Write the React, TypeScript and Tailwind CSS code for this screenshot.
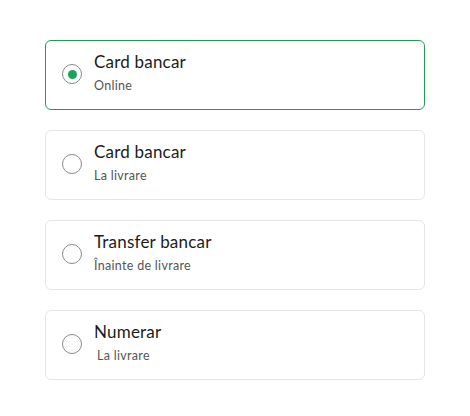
import { useState } from 'react'

const options = [
  { id: 'card-online', title: 'Card bancar', subtitle: 'Online' },
  { id: 'card-delivery', title: 'Card bancar', subtitle: 'La livrare' },
  { id: 'transfer', title: 'Transfer bancar', subtitle: 'Înainte de livrare' },
  { id: 'cash', title: 'Numerar', subtitle: 'La livrare', shift: true },
]

export default function App() {
  const [selected, setSelected] = useState('card-online')

  return (
    <div className="min-h-screen bg-white pt-10 pl-[45px] font-['Lato','Noto_Sans',sans-serif]">
      <div className="flex w-[380px] flex-col gap-5">
        {options.map((opt) => {
          const active = selected === opt.id
          return (
            <button
              key={opt.id}
              onClick={() => setSelected(opt.id)}
              className={`flex h-[70px] items-center rounded-[6px] border bg-white pl-[16px] text-left ${
                active ? 'border-[#1f9d55]' : 'border-[#e6e6e6]'
              }`}
            >
              {/* radio */}
              <span className="-mt-[2px] flex h-[20px] w-[20px] shrink-0 items-center justify-center rounded-full border border-[#8a8a8a]">
                {active && <span className="h-[9px] w-[9px] rounded-full bg-[#1ba35a]" />}
              </span>
              <span className="mb-[4px] ml-3 flex flex-col">
                <span className="text-[17px] leading-5 tracking-[0.2px] text-[#1b1b1b]">{opt.title}</span>
                <span className={`mt-[6px] text-[12.5px] leading-4 tracking-[0.3px] text-[#555] ${opt.shift ? 'pl-[3px]' : ''}`}>
                  {opt.subtitle}
                </span>
              </span>
            </button>
          )
        })}
      </div>
    </div>
  )
}
